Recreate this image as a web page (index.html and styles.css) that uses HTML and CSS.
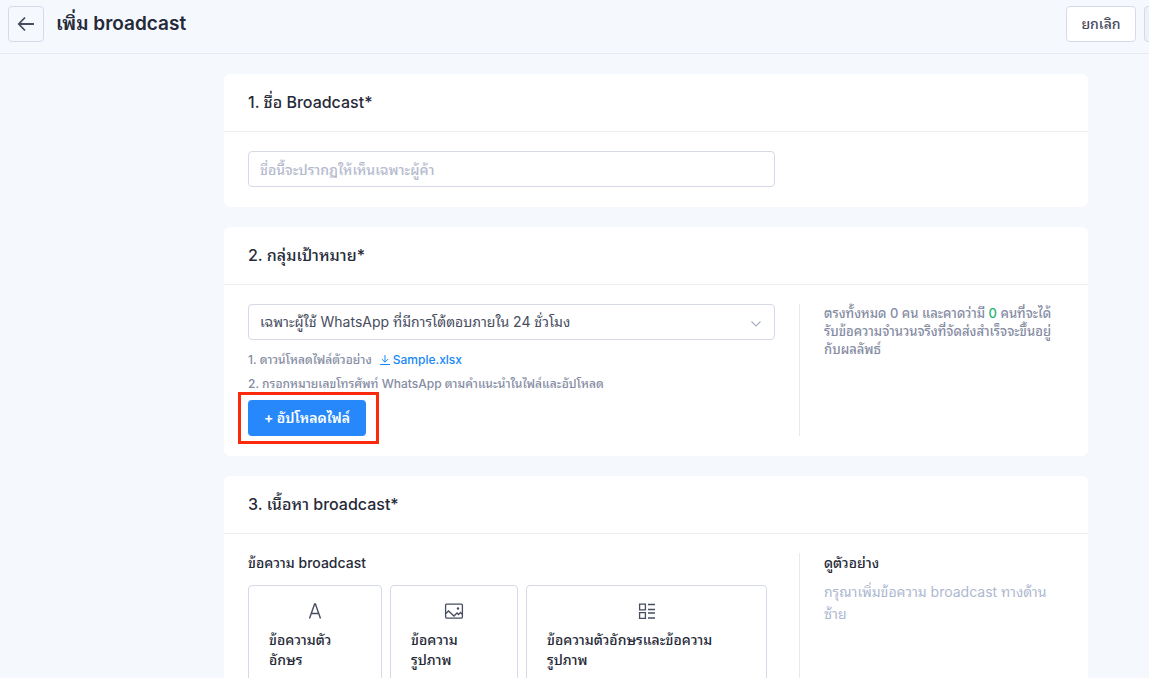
FILE: index.html
```html
<!DOCTYPE html>
<html lang="th">
<head>
<meta charset="utf-8">
<meta name="viewport" content="width=device-width, initial-scale=1">
<title>เพิ่ม broadcast</title>
<link rel="stylesheet" href="styles.css">
</head>
<body>
<header class="topbar">
  <button class="back" type="button" aria-label="Back">
    <svg width="18" height="16" viewBox="0 0 18 16" fill="none" stroke="currentColor" stroke-width="1.800"><path d="M17 8H2M8 1.500 1.800 8 8 14.500"/></svg>
  </button>
  <h1 class="title">เพิ่ม broadcast</h1>
  <div class="actions">
    <button class="cancel" type="button">ยกเลิก</button>
    <button class="next" type="button" aria-label="Next"></button>
  </div>
</header>
<main class="content">
  <section class="card">
    <h2 class="card-title"><label for="name">1. ชื่อ Broadcast*</label></h2>
    <div class="card-body">
      <div class="form">
        <input class="field" id="name" type="text" placeholder="ชื่อนี้จะปรากฏให้เห็นเฉพาะผู้ค้า">
      </div>
    </div>
  </section>

  <section class="card">
    <h2 class="card-title"><label for="target">2. กลุ่มเป้าหมาย*</label></h2>
    <div class="card-body">
      <div class="form">
        <div class="select-wrap">
          <select class="field" id="target"><option>เฉพาะผู้ใช้ WhatsApp ที่มีการโต้ตอบภายใน 24 ชั่วโมง</option></select>
          <svg class="chevron" width="10" height="6" viewBox="0 0 10 6" fill="none" stroke="currentColor" stroke-width="1.200"><path d="m.5.5 4.500 4.500L9.500.5"/></svg>
        </div>
        <p class="step first">1. ดาวน์โหลดไฟล์ตัวอย่าง
          <a class="sample" href="#sample"><svg width="10" height="10" viewBox="0 0 10 10" fill="none" stroke="currentColor"><path d="M5 0v7M1.800 4 5 7.200 8.200 4M0 9.500h10"/></svg>Sample.xlsx</a></p>
        <p class="step">2. กรอกหมายเลขโทรศัพท์ WhatsApp ตามคำแนะนำในไฟล์และอัปโหลด</p>
        <div class="upload-wrap"><button class="upload" type="button">+ อัปโหลดไฟล์</button></div>
      </div>
      <aside class="side">
        <p class="estimate">ตรงทั้งหมด 0 คน และคาดว่ามี <span class="count">0</span> คนที่จะได้<br>รับข้อความจำนวนจริงที่จัดส่งสำเร็จจะขึ้นอยู่<br>กับผลลัพธ์</p>
      </aside>
    </div>
  </section>

  <section class="card">
    <h2 class="card-title">3. เนื้อหา broadcast*</h2>
    <div class="card-body tall">
      <div class="form">
        <h3 class="label">ข้อความ broadcast</h3>
        <div class="types">
          <button class="type text" type="button">
            <svg width="20" height="18" viewBox="0 0 20 18" fill="none" stroke="currentColor" stroke-width="1.400"><path d="M4.500 16.500 9.600 2h.8l5.100 14.500M6.300 11.500h7.400"/></svg>
            <span>ข้อความตัว<br>อักษร</span>
          </button>
          <button class="type image" type="button">
            <svg width="20" height="18" viewBox="0 0 20 18" fill="none" stroke="currentColor" stroke-width="1.300"><rect x="1.600" y="2.100" width="16.800" height="14" rx="1"/><path d="m2 11.500 2.500-2.500 5.500 5 3-3 1.500 1.500 2-2 2 2"/><circle cx="14" cy="6.500" r="1.200" fill="currentColor" stroke="none"/></svg>
            <span>ข้อความ<br>รูปภาพ</span>
          </button>
          <button class="type both" type="button">
            <svg width="20" height="18" viewBox="0 0 20 18" fill="none" stroke="currentColor" stroke-width="1.300"><path d="M2.600 2.100h5.800v5.800H2.600zM2.600 10.600h5.800v5.800H2.600zM11 2.500h7M11 7.500h7M11 11h7M11 16h7"/></svg>
            <span>ข้อความตัวอักษรและข้อความ<br>รูปภาพ</span>
          </button>
        </div>
      </div>
      <aside class="side">
        <h3 class="label">ดูตัวอย่าง</h3>
        <p class="hint">กรุณาเพิ่มข้อความ broadcast ทางด้าน<br>ซ้าย</p>
      </aside>
    </div>
  </section>
</main>
</body>
</html>
```
FILE: styles.css
```css
* { box-sizing: border-box; }

body {
  margin: 0;
  height: 100vh;
  overflow: hidden;
  background: #f5f9fe;
  color: #262a38;
  font: 14px/20px Inter, "Noto Sans Thai Looped", "Noto Looped Thai", Loma, Garuda, Waree, "Noto Sans Thai", "Noto Sans", sans-serif;
}

h1, h2, h3, p { margin: 0; }
button, input, select { font: inherit; color: inherit; }
button { padding: 0; cursor: pointer; }
svg { display: block; }

.topbar {
  display: flex;
  align-items: center;
  height: 54px;
  padding: 0 0 6px 8px;
  border-bottom: 1px solid #e6eaf2;
}

.back {
  display: grid;
  place-items: center;
  width: 36px;
  height: 36px;
  border: 1px solid #d5d9e8;
  border-radius: 4px;
  background: transparent;
  color: #474c60;
}

.title {
  margin-left: 12px;
  font-size: 19px;
  line-height: 28px;
  font-weight: 600;
}

.actions {
  display: flex;
  gap: 8px;
  width: 83px;
  margin-left: auto;
  overflow: hidden;
}

.cancel, .next {
  flex: none;
  width: 70px;
  height: 36px;
  border: 1px solid #d5d9e8;
  border-radius: 4px;
  background: #fff;
  color: #474c60;
  font-weight: 500;
}

.next { background: #edf1fa; }

.content {
  display: grid;
  gap: 20px;
  padding: 20px 61px 0 224px;
}

.card {
  border-radius: 6px;
  background: #fff;
}

.card-title {
  padding: 16px 24px 17px;
  border-bottom: 1px solid #eaecf2;
  font-size: 16px;
  line-height: 24px;
  font-weight: 500;
}

.card-body {
  display: grid;
  grid-template-columns: minmax(0, 527fr) minmax(0, 265fr);
  gap: 24px;
  padding: 19px 24px 20px;
}

.tall { min-height: 240px; }

.field {
  display: block;
  width: 100%;
  height: 36px;
  padding: 0 11px;
  border: 1px solid #d5d9e8;
  border-radius: 4px;
  background: #fff;
  color: #474c60;
  appearance: none;
}

.field::placeholder { color: #b4bacd; opacity: 1; font-weight: 500; }

.select-wrap { position: relative; }

.chevron {
  position: absolute;
  top: 17px;
  right: 14px;
  color: #a9b0c4;
  pointer-events: none;
}

.step {
  margin-bottom: 6px;
  color: #858ca3;
  font-size: 12px;
  line-height: 18px;
  font-weight: 500;
  white-space: nowrap;
}

.first {
  display: flex;
  gap: 8px;
  margin-top: 11px;
}

.sample {
  display: flex;
  align-items: center;
  gap: 3px;
  color: #1687f8;
  text-decoration: none;
}

.upload-wrap {
  position: relative;
  width: 118px;
  margin-top: 7px;
}

.upload-wrap::after {
  content: "";
  position: absolute;
  inset: -8px -13px -8px -10px;
  border: 3px solid #fb2a0c;
  pointer-events: none;
}

.upload {
  display: block;
  width: 100%;
  height: 36px;
  border: 0;
  border-radius: 4px;
  background: #2688fb;
  color: #fff;
  font-weight: 600;
  white-space: nowrap;
}

.side {
  padding-left: 24px;
  border-left: 1px solid #e6e9f0;
  white-space: nowrap;
}

.estimate {
  color: #858ca3;
  font-size: 13px;
  line-height: 18px;
  font-weight: 500;
}

.count { color: #29b473; }

.label {
  font-size: 14px;
  line-height: 20px;
  font-weight: 500;
}

.types {
  display: flex;
  gap: 8px;
  margin-top: 12px;
}

.type {
  display: flex;
  flex-direction: column;
  align-items: center;
  gap: 10px;
  height: 112px;
  padding: 16px 20px;
  border: 1px solid #d5d9e8;
  border-radius: 4px;
  background: #fff;
  text-align: left;
  white-space: nowrap;
  font-weight: 500;
}

.type svg { color: #474c60; }
.type span { align-self: flex-start; color: #262a38; }
.text { width: 134px; }
.image { width: 128px; }
.both { width: 241px; }

.hint {
  margin-top: 8px;
  color: #aeb8d0;
  line-height: 22px;
}
```
